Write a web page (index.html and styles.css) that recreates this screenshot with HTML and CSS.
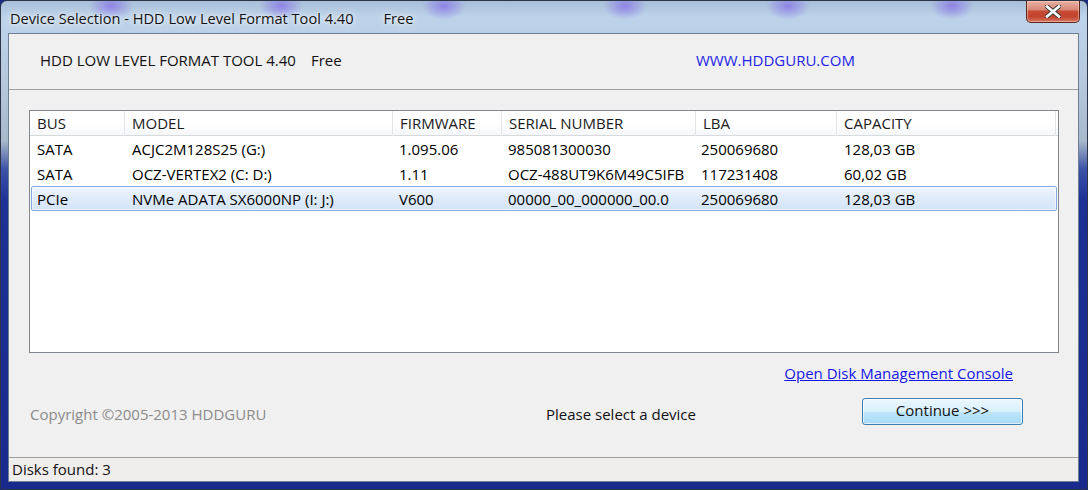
FILE: index.html
```html
<!DOCTYPE html>
<html>
<head>
<meta charset="utf-8">
<title>Device Selection</title>
<link rel="stylesheet" href="styles.css">
</head>
<body>
<div class="window">
  <div class="titlebar">
    <div class="title">Device Selection - HDD Low Level Format Tool 4.40<span class="title-free">Free</span></div>
    <div class="close-btn">
      <svg width="16" height="13" viewBox="0 0 16 13">
        <path d="M2 1.5 L14 11.5 M14 1.5 L2 11.5" stroke="#3a3a3a" stroke-width="4.6" stroke-linecap="square"/>
        <path d="M2 1.5 L14 11.5 M14 1.5 L2 11.5" stroke="#ffffff" stroke-width="2.6" stroke-linecap="square"/>
      </svg>
    </div>
  </div>
  <div class="client">
    <div class="header">
      <div class="product">HDD LOW LEVEL FORMAT TOOL 4.40<span class="product-free">Free</span></div>
      <div class="site">WWW.HDDGURU.COM</div>
    </div>
    <div class="listbox">
      <div class="list-head">
        <div class="hcell">BUS</div>
        <div class="hcell">MODEL</div>
        <div class="hcell">FIRMWARE</div>
        <div class="hcell">SERIAL NUMBER</div>
        <div class="hcell">LBA</div>
        <div class="hcell last">CAPACITY</div>
      </div>
      <div class="row">
        <div class="cell">SATA</div>
        <div class="cell">ACJC2M128S25 (G:)</div>
        <div class="cell">1.095.06</div>
        <div class="cell">985081300030</div>
        <div class="cell">250069680</div>
        <div class="cell">128,03 GB</div>
      </div>
      <div class="row">
        <div class="cell">SATA</div>
        <div class="cell">OCZ-VERTEX2 (C: D:)</div>
        <div class="cell">1.11</div>
        <div class="cell">OCZ-488UT9K6M49C5IFB</div>
        <div class="cell">117231408</div>
        <div class="cell">60,02 GB</div>
      </div>
      <div class="row selected">
        <div class="cell">PCIe</div>
        <div class="cell">NVMe ADATA SX6000NP (I: J:)</div>
        <div class="cell">V600</div>
        <div class="cell">00000_00_000000_00.0</div>
        <div class="cell">250069680</div>
        <div class="cell">128,03 GB</div>
      </div>
    </div>
    <div class="link-row">
      <a class="link" href="#">Open Disk Management Console</a>
    </div>
    <div class="action-row">
      <div class="copyright">Copyright ©2005-2013 HDDGURU</div>
      <div class="message">Please select a device</div>
      <button class="continue">Continue &gt;&gt;&gt;</button>
    </div>
    <div class="statusbar">Disks found: 3</div>
  </div>
</div>
</body>
</html>
```
FILE: styles.css
```css
* { box-sizing: border-box; }
html, body { margin: 0; padding: 0; background: #1a2a8a; }
body {
  width: 1088px;
  height: 490px;
  overflow: hidden;
  font-family: "Open Sans", "Noto Sans", sans-serif;
  font-size: 15px;
  color: #000;
}
.window {
  width: 1088px;
  height: 490px;
  border: 1px solid #2b3548;
  border-radius: 7px 7px 3px 3px;
  display: flex;
  flex-direction: column;
  background:
    radial-gradient(ellipse 22px 14px at 110px 5px, rgba(128,104,232,0.7), rgba(128,104,232,0) 100%),
    radial-gradient(ellipse 22px 14px at 280px 5px, rgba(128,104,232,0.7), rgba(128,104,232,0) 100%),
    radial-gradient(ellipse 22px 14px at 443px 5px, rgba(128,104,232,0.7), rgba(128,104,232,0) 100%),
    radial-gradient(ellipse 22px 14px at 624px 5px, rgba(128,104,232,0.7), rgba(128,104,232,0) 100%),
    radial-gradient(ellipse 22px 14px at 787px 5px, rgba(128,104,232,0.7), rgba(128,104,232,0) 100%),
    radial-gradient(ellipse 22px 14px at 951px 5px, rgba(128,104,232,0.7), rgba(128,104,232,0) 100%),
    linear-gradient(to bottom, #a9bfd8 0px, #bdd3ea 16px, #bcd1e8 32px, #b4c6da 90px, #a8b8cb 140px, #3d52a8 168px, #1f3096 200px, #1a2a8c 100%);
}
.titlebar {
  height: 32px;
  flex: none;
  display: flex;
  justify-content: space-between;
  align-items: flex-start;
}
.title {
  font-family: "Open Sans", "Noto Sans", sans-serif;
  font-size: 14.6px;
  color: #111;
  padding: 7px 0 0 9px;
  white-space: nowrap;
  text-shadow: 0 0 8px rgba(255,255,255,0.9), 0 0 3px rgba(255,255,255,0.9);
}
.title-free { margin-left: 30px; }
.close-btn {
  width: 54px;
  height: 22px;
  margin-right: 7px;
  border: 1px solid #5a2418;
  border-top: none;
  border-radius: 0 0 5px 5px;
  background: linear-gradient(to bottom, #e9b0a2 0%, #d98a79 40%, #c84a34 50%, #c2442e 75%, #d67a62 100%);
  box-shadow: inset 0 0 0 1px rgba(255,210,200,0.5);
  display: flex;
  align-items: center;
  justify-content: center;
}
.client {
  margin: 0 8px 0 7px;
  height: 449px;
  flex: none;
  background: #f0f0f0;
  border: 1px solid #6e7f94;
  display: flex;
  flex-direction: column;
}
.header {
  height: 56px;
  flex: none;
  border-bottom: 1px solid #a0a0a0;
  display: flex;
  align-items: center;
  padding: 0 0 4px 31px;
}
.product {
  width: 656px;
  color: #111;
  white-space: nowrap;
}
.product-free { margin-left: 15px; }
.site {
  color: #2323e6;
}
.listbox {
  margin: 20px 0 0 20px;
  width: 1030px;
  height: 243px;
  flex: none;
  background: #fff;
  border: 1px solid #828790;
}
.list-head {
  display: grid;
  grid-template-columns: 95px 268px 109px 194px 141px 1fr;
  height: 25px;
  border-bottom: 1px solid #d6d9de;
  background: linear-gradient(to bottom, #ffffff 0%, #ffffff 50%, #f6f7f9 100%);
}
.hcell {
  padding-left: 7px;
  line-height: 25px;
  border-right: 1px solid #e3e5e9;
  color: #1a1a1a;
  white-space: nowrap;
}
.hcell.last { margin-right: 2px; }
.row {
  display: grid;
  grid-template-columns: 95px 267px 109px 193px 143px 1fr;
  height: 25px;
  margin: 0 1px;
  border: 1px solid transparent;
  border-radius: 2px;
  align-items: center;
}
.cell {
  padding-left: 5px;
  white-space: nowrap;
}
.row.selected {
  border-color: #84acdd;
  background: linear-gradient(to bottom, #eef5fd 0%, #dfebfa 50%, #d3e4f8 100%);
  box-shadow: inset 0 0 0 1px rgba(255,255,255,0.55);
}
.link-row {
  display: flex;
  justify-content: flex-end;
  padding-right: 65px;
  margin-top: 10px;
  height: 20px;
  line-height: 20px;
}
.link {
  color: #1515e8;
  text-decoration: underline;
}
.action-row {
  display: grid;
  grid-template-columns: 516px 316px 161px;
  padding-left: 21px;
  margin-top: 15px;
  align-items: start;
}
.copyright {
  color: #8b8b8b;
  margin-top: 6px;
  white-space: nowrap;
}
.message {
  color: #111;
  margin-top: 6px;
  white-space: nowrap;
}
.continue {
  width: 161px;
  height: 27px;
  font-family: "Open Sans", "Noto Sans", sans-serif;
  font-size: 15px;
  color: #111;
  border: 1px solid #3c7fb1;
  border-radius: 3px;
  background: linear-gradient(to bottom, #eaf6fd 0%, #d9f0fc 50%, #bee6fd 51%, #a7d9f5 100%);
  box-shadow: inset 0 0 0 1px rgba(255,255,255,0.6);
  padding: 0 0 3px 0;
}
.statusbar {
  margin-top: auto;
  height: 24px;
  border-top: 1px solid #a0a0a0;
  background: #f0eded;
  padding-left: 3px;
  line-height: 22px;
  color: #111;
}
```
